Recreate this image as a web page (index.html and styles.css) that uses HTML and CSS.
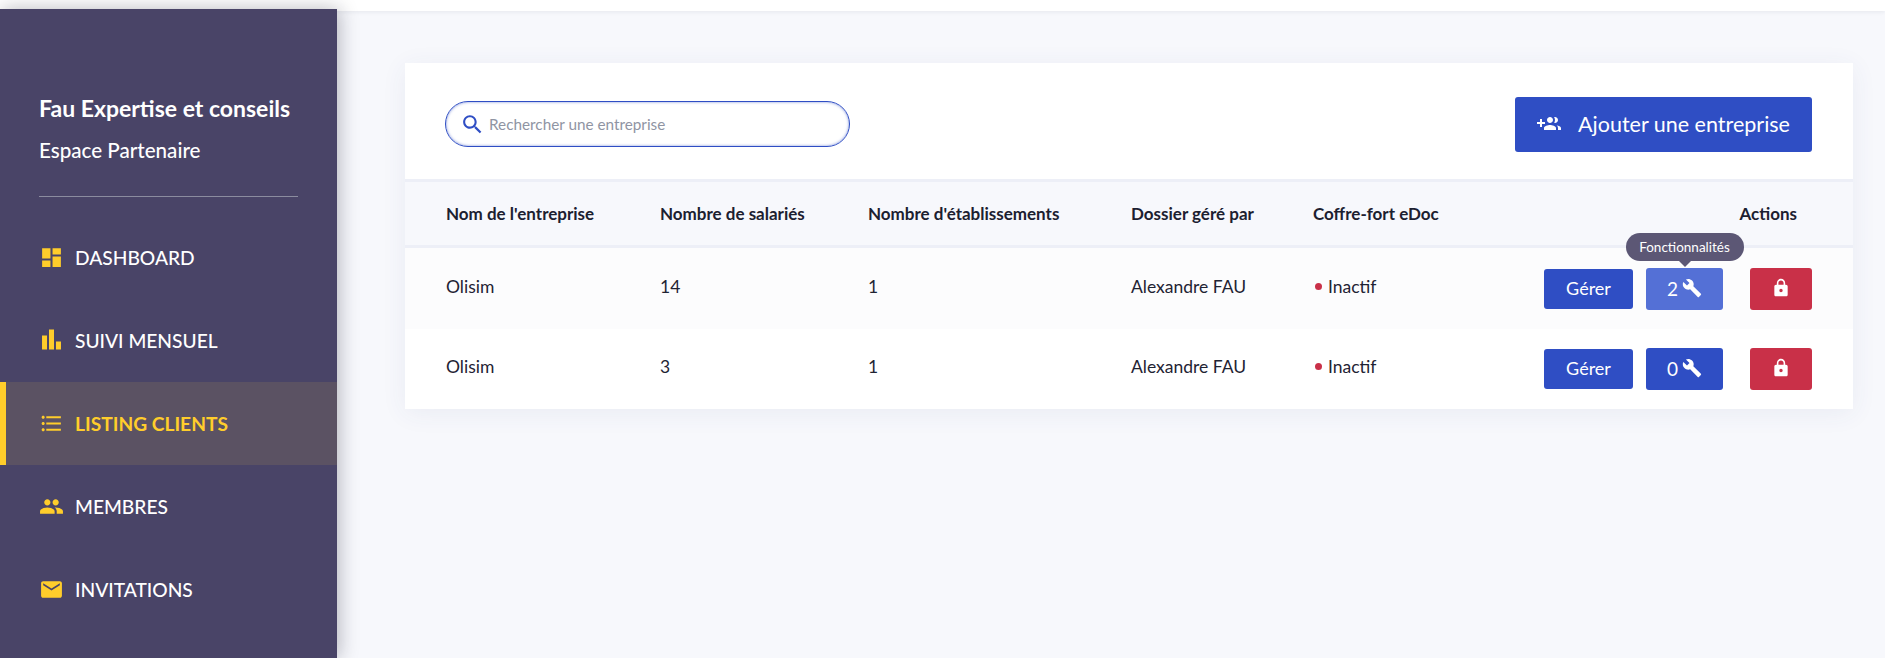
FILE: index.html
```html
<!DOCTYPE html>
<html lang="fr">
<head>
<meta charset="utf-8">
<title>Listing clients</title>
<link rel="stylesheet" href="styles.css">
</head>
<body>
<header class="topbar"></header>
<div class="layout">
  <aside class="sidebar">
    <div class="brand">
      <h1 class="brand-name">Fau Expertise et conseils</h1>
      <p class="brand-sub">Espace Partenaire</p>
    </div>
    <hr class="divider">
    <nav class="nav">
      <a class="nav-item"><svg class="nav-icon" viewBox="0 0 24 24"><path d="M3 13h8V3H3v10zm0 8h8v-6H3v6zm10 0h8V11h-8v10zm0-18v6h8V3h-8z"/></svg><span>DASHBOARD</span></a>
      <a class="nav-item"><svg class="nav-icon" viewBox="0 0 24 24"><path d="M2.900 7.200h4.800v13.400H2.900zM9.600 1.500h4.800v19.100H9.600zM16.300 13h4.800v7.600h-4.800z"/></svg><span>SUIVI MENSUEL</span></a>
      <a class="nav-item active"><svg class="nav-icon" viewBox="0 0 24 24"><path d="M4 10.5c-.83 0-1.5.67-1.5 1.5s.67 1.5 1.5 1.5 1.5-.67 1.5-1.5-.67-1.5-1.5-1.5zm0-6c-.83 0-1.5.67-1.5 1.5S3.170 7.500 4 7.500 5.500 6.830 5.500 6 4.830 4.500 4 4.500zm0 12c-.83 0-1.500.68-1.500 1.500s.68 1.500 1.500 1.500 1.500-.68 1.500-1.500-.67-1.500-1.500-1.500zM7 19h14v-2H7v2zm0-6h14v-2H7v2zm0-8v2h14V5H7z"/></svg><span>LISTING CLIENTS</span></a>
      <a class="nav-item"><svg class="nav-icon" viewBox="0 0 24 24"><path d="M16 11c1.660 0 2.990-1.340 2.990-3S17.660 5 16 5c-1.660 0-3 1.340-3 3s1.340 3 3 3zm-8 0c1.660 0 2.990-1.340 2.990-3S9.660 5 8 5C6.340 5 5 6.340 5 8s1.340 3 3 3zm0 2c-2.330 0-7 1.170-7 3.500V19h14v-2.500c0-2.330-4.670-3.500-7-3.500zm8 0c-.29 0-.62.02-.97.05 1.160.84 1.970 1.970 1.970 3.450V19h6v-2.500c0-2.330-4.670-3.500-7-3.500z"/></svg><span>MEMBRES</span></a>
      <a class="nav-item"><svg class="nav-icon" viewBox="0 0 24 24"><path d="M20 4H4c-1.100 0-1.990.9-1.990 2L2 18c0 1.100.9 2 2 2h16c1.100 0 2-.9 2-2V6c0-1.100-.9-2-2-2zm0 4l-8 5-8-5V6l8 5 8-5v2z"/></svg><span>INVITATIONS</span></a>
    </nav>
  </aside>
  <main class="main">
    <section class="card">
      <div class="toolbar">
        <label class="search">
          <svg class="search-icon" viewBox="0 0 24 24"><path d="M15.500 14h-.79l-.28-.27C15.410 12.590 16 11.110 16 9.500 16 5.910 13.090 3 9.500 3S3 5.910 3 9.500 5.910 16 9.500 16c1.610 0 3.090-.59 4.230-1.570l.27.28v.79l5 4.990L20.490 19l-4.990-5zm-6 0C7.010 14 5 11.990 5 9.500S7.010 5 9.500 5 14 7.010 14 9.500 11.990 14 9.500 14z"/></svg>
          <input class="search-input" type="text" placeholder="Rechercher une entreprise">
        </label>
        <button class="btn btn-add"><svg class="add-icon" viewBox="0 0 24 24"><path d="M8 10H5V7H3v3H0v2h3v3h2v-3h3v-2zm10 1c1.660 0 2.990-1.340 2.990-3S19.660 5 18 5c-.32 0-.63.05-.91.14.57.81.9 1.790.9 2.860s-.34 2.040-.9 2.860c.28.09.59.14.91.14zm-5 0c1.660 0 3-1.340 3-3s-1.340-3-3-3-3 1.340-3 3 1.340 3 3 3zm6.620 2.160c.83.73 1.380 1.660 1.380 2.840v2h3v-2c0-1.540-2.370-2.490-4.380-2.840zM13 13c-2 0-6 1-6 3v2h12v-2c0-2-4-3-6-3z"/></svg><span>Ajouter une entreprise</span></button>
      </div>
      <div class="row head">
        <div>Nom de l'entreprise</div>
        <div>Nombre de salariés</div>
        <div>Nombre d'établissements</div>
        <div>Dossier géré par</div>
        <div>Coffre-fort eDoc</div>
        <div class="head-actions">Actions</div>
      </div>
      <div class="row body odd">
        <div class="cell">Olisim</div>
        <div class="cell">14</div>
        <div class="cell">1</div>
        <div class="cell">Alexandre FAU</div>
        <div class="cell status"><span class="dot"></span>Inactif</div>
        <div class="actions">
          <button class="btn btn-manage">Gérer</button>
          <button class="btn btn-feature hover">2<svg class="tool-icon" viewBox="0 0 24 24"><path d="M22.700 19l-9.100-9.100c.9-2.300.4-5-1.500-6.900-2-2-5-2.400-7.400-1.300L9 6 6 9 1.600 4.700C.4 7.100.9 10.100 2.900 12.100c1.900 1.900 4.600 2.400 6.900 1.500l9.100 9.100c.4.4 1 .4 1.400 0l2.300-2.300c.5-.4.5-1.100.1-1.400z"/></svg><span class="tooltip">Fonctionnalités</span></button>
          <button class="btn btn-lock"><svg class="lock-icon" viewBox="0 0 24 24"><path d="M18 8h-1V6c0-2.760-2.240-5-5-5S7 3.240 7 6v2H6c-1.100 0-2 .9-2 2v10c0 1.100.9 2 2 2h12c1.100 0 2-.9 2-2V10c0-1.100-.9-2-2-2zm-6 9c-1.100 0-2-.9-2-2s.9-2 2-2 2 .9 2 2-.9 2-2 2zm3.100-9H8.900V6c0-1.710 1.390-3.100 3.100-3.100 1.710 0 3.100 1.390 3.100 3.100v2z"/></svg></button>
        </div>
      </div>
      <div class="row body">
        <div class="cell">Olisim</div>
        <div class="cell">3</div>
        <div class="cell">1</div>
        <div class="cell">Alexandre FAU</div>
        <div class="cell status"><span class="dot"></span>Inactif</div>
        <div class="actions">
          <button class="btn btn-manage">Gérer</button>
          <button class="btn btn-feature">0<svg class="tool-icon" viewBox="0 0 24 24"><path d="M22.700 19l-9.100-9.100c.9-2.300.4-5-1.500-6.900-2-2-5-2.400-7.400-1.300L9 6 6 9 1.600 4.700C.4 7.100.9 10.100 2.900 12.100c1.900 1.900 4.600 2.400 6.900 1.500l9.100 9.100c.4.4 1 .4 1.400 0l2.300-2.300c.5-.4.5-1.100.1-1.400z"/></svg></button>
          <button class="btn btn-lock"><svg class="lock-icon" viewBox="0 0 24 24"><path d="M18 8h-1V6c0-2.760-2.240-5-5-5S7 3.240 7 6v2H6c-1.100 0-2 .9-2 2v10c0 1.100.9 2 2 2h12c1.100 0 2-.9 2-2V10c0-1.100-.9-2-2-2zm-6 9c-1.100 0-2-.9-2-2s.9-2 2-2 2 .9 2 2-.9 2-2 2zm3.100-9H8.900V6c0-1.710 1.390-3.100 3.100-3.100 1.710 0 3.100 1.390 3.100 3.100v2z"/></svg></button>
        </div>
      </div>
    </section>
  </main>
</div>
</body>
</html>
```
FILE: styles.css
```css
* { box-sizing: border-box; }
html, body { margin: 0; height: 658px; overflow: hidden; }
body { background: #f7f8fc; font-family: "Lato", sans-serif; color: #1f2333; }
.topbar { height: 11px; background: #fff; box-shadow: 0 1px 4px rgba(30, 35, 70, .08); }
.layout { display: flex; height: 649px; margin-top: -2px; position: relative; }
.sidebar { flex: 0 0 337px; background: #494467; color: #fff; box-shadow: 2px 0 18px rgba(20, 20, 40, .3); }
.brand { padding: 84px 39px 0; }
.brand-name { margin: 0; font-size: 23px; line-height: 30px; font-weight: 700; }
.brand-sub { margin: 12px 0 0; font-size: 20.6px; line-height: 30px; font-weight: 500; }
.divider { margin: 31px 39px 0; border: 0; border-top: 1px solid #8b8c9f; }
.nav { display: flex; flex-direction: column; margin-top: 19px; }
.nav-item { display: flex; align-items: center; gap: 11px; height: 83px; padding-left: 39px; font-size: 19.2px; font-weight: 500; color: #fff; }
.nav-icon { width: 25px; height: 25px; fill: #ffcd2b; flex: none; }
.nav-item.active { background: #5b5263; border-left: 6px solid #ffcd2b; padding-left: 33px; color: #ffcd2b; font-weight: 700; }
.main { flex: 1; padding: 54px 32px 0 68px; }
.card { background: #fff; box-shadow: 0 4px 24px rgba(60, 70, 130, .07); }
.toolbar { display: flex; justify-content: space-between; align-items: center; height: 116px; padding: 7px 41px 0 40px; }
.search { display: flex; align-items: center; gap: 4px; width: 405px; height: 46px; margin-bottom: 1px; padding-left: 14px; border: 1px solid #2f4ec4; border-radius: 23px; background: #fff; box-shadow: inset 0 0 3px rgba(47, 78, 196, .6); }
.search-icon { width: 25px; height: 25px; fill: #2f4ec4; flex: none; }
.search-input { flex: 1; min-width: 0; padding: 0 0 1px; border: 0; outline: 0; background: none; font: 15.3px "Lato", sans-serif; color: #1f2333; }
.search-input::placeholder { color: #8f94a3; opacity: 1; }
.btn { display: inline-flex; align-items: center; justify-content: center; border: 0; border-radius: 3px; color: #fff; font-family: "Lato", sans-serif; padding: 0; }
.btn-add { width: 297px; height: 55px; padding-bottom: 2px; gap: 17px; background: #2f4ec4; font-size: 21.5px; }
.add-icon { width: 24px; height: 24px; fill: #fff; }
.row { display: grid; padding: 0 41px; align-items: center; grid-template-columns: 214px 208px 263px 182px 1fr auto; }
.head { height: 69px; background: #f7f8fc; border-top: 3px solid #edeff7; border-bottom: 3px solid #edeff7; font-size: 17px; font-weight: 700; color: #1c2030; }
.head-actions { padding-right: 15px; }
.body { height: 80px; font-size: 17.5px; }
.odd { height: 81px; background: #fcfcfd; }
.odd .actions { padding-top: 1px; }
.cell { padding-bottom: 5px; }
.status { display: flex; align-items: center; gap: 6px; }
.dot { width: 7px; height: 7px; margin-left: 2px; border-radius: 50%; background: #c93048; }
.actions { display: flex; align-items: center; }
.btn-manage { width: 89px; height: 40px; padding-bottom: 3px; background: #2f4ec4; font-size: 18px; }
.btn-feature { position: relative; width: 77px; height: 42px; margin-left: 13px; padding-bottom: 2px; gap: 4px; background: #2f4ec4; font-size: 19px; }
.btn-feature.hover { background: #5470d6; }
.btn-lock { width: 62px; height: 42px; margin-left: 27px; padding-bottom: 3px; background: #c93048; }
.tool-icon { width: 20px; height: 20px; fill: #fff; }
.lock-icon { width: 20px; height: 20px; fill: #fff; }
.tooltip { position: absolute; left: 50%; bottom: 49px; transform: translateX(-50%); width: 118px; height: 28px; display: flex; align-items: center; justify-content: center; border-radius: 14px; background: #5c5775; font-size: 13.5px; white-space: nowrap; color: #fff; }
.tooltip::after { content: ""; position: absolute; left: 50%; top: 100%; margin-left: -6px; border: 6px solid transparent; border-bottom: 0; border-top-color: #5c5775; }
```
